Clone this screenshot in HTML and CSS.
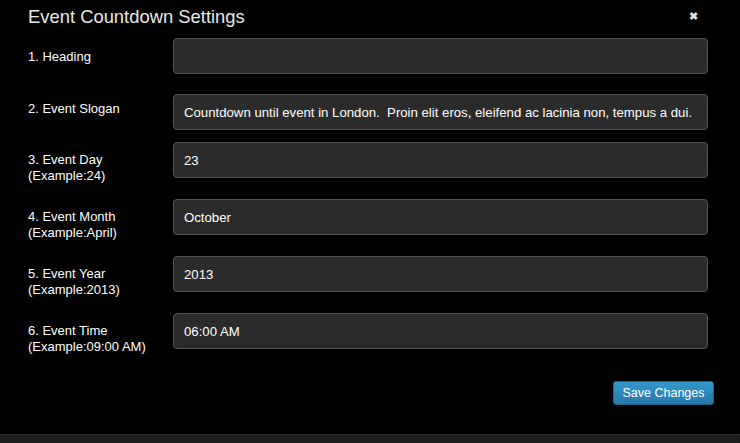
FILE: index.html
```html
<!DOCTYPE html>
<html>
<head>
<meta charset="utf-8">
<link rel="stylesheet" href="styles.css">
</head>
<body>
<div class="modal">
  <div class="header">
    <h3 class="title">Event Countdown Settings</h3>
    <span class="close">&#x2716;</span>
  </div>
  <form class="body">
    <div class="row r1">
      <label class="lbl">1. Heading</label>
      <div class="field"></div>
    </div>
    <div class="row r2">
      <label class="lbl">2. Event Slogan</label>
      <div class="field">Countdown until event in London.&nbsp; Proin elit eros, eleifend ac lacinia non, tempus a dui.</div>
    </div>
    <div class="row r3">
      <label class="lbl">3. Event Day<br>(Example:24)</label>
      <div class="field">23</div>
    </div>
    <div class="row r3">
      <label class="lbl">4. Event Month<br>(Example:April)</label>
      <div class="field">October</div>
    </div>
    <div class="row r3">
      <label class="lbl">5. Event Year<br>(Example:2013)</label>
      <div class="field">2013</div>
    </div>
    <div class="row">
      <label class="lbl">6. Event Time<br>(Example:09:00 AM)</label>
      <div class="field">06:00 AM</div>
    </div>
  </form>
  <div class="footer">
    <button class="btn">Save Changes</button>
  </div>
</div>
<div class="strip"></div>
</body>
</html>
```
FILE: styles.css
```css
html, body {
  margin: 0;
  padding: 0;
  background: #000;
  width: 740px;
  height: 443px;
  overflow: hidden;
  font-family: "Liberation Sans", Arial, sans-serif;
  color: #fff;
}
.modal {
  height: 434px;
  display: flex;
  flex-direction: column;
}
.header {
  display: flex;
  justify-content: space-between;
  align-items: center;
  padding: 5px 42px 0 28px;
  height: 23px;
}
.title {
  margin: 0;
  font-weight: normal;
  font-size: 18.4px;
  color: #e8e8e8;
}
.close {
  font-size: 11px;
  color: #ddd;
  font-weight: bold;
}
.body {
  padding: 10px 32px 0 28px;
  display: flex;
  flex-direction: column;
}
.row {
  display: flex;
  align-items: flex-start;
  height: 36px;
}
.r1 { margin-bottom: 20px; }
.r2 { margin-bottom: 12px; }
.r3 { margin-bottom: 21px; }
.lbl {
  width: 145px;
  flex: none;
  font-size: 13px;
  line-height: 16px;
  padding-top: 10px;
}
.r1 .lbl { padding-top: 11px; }
.r2 .lbl { padding-top: 7px; }
.field {
  flex: 1;
  height: 34px;
  box-sizing: content-box;
  background: #2b2b2b;
  border: 1px solid #555;
  border-radius: 4px;
  padding: 0 10px;
  font-size: 13.2px;
  line-height: 35px;
  color: #fff;
  white-space: nowrap;
  overflow: hidden;
}
.footer {
  display: flex;
  justify-content: flex-end;
  padding: 32px 26px 0 0;
}
.btn {
  width: 101px;
  height: 24px;
  border: 1px solid #1d6891;
  border-radius: 3px;
  background: linear-gradient(#3498cc, #2679a8);
  color: #fff;
  font-family: "Liberation Sans", Arial, sans-serif;
  font-size: 12.5px;
  padding: 0;
}
.strip {
  height: 9px;
  border-top: 1px solid #2a2a2a;
  background-color: #1a1a1a;
  background-image: linear-gradient(45deg, #222 25%, transparent 25%, transparent 75%, #222 75%), linear-gradient(45deg, #222 25%, transparent 25%, transparent 75%, #222 75%);
  background-size: 4px 4px;
  background-position: 0 0, 2px 2px;
}
```
